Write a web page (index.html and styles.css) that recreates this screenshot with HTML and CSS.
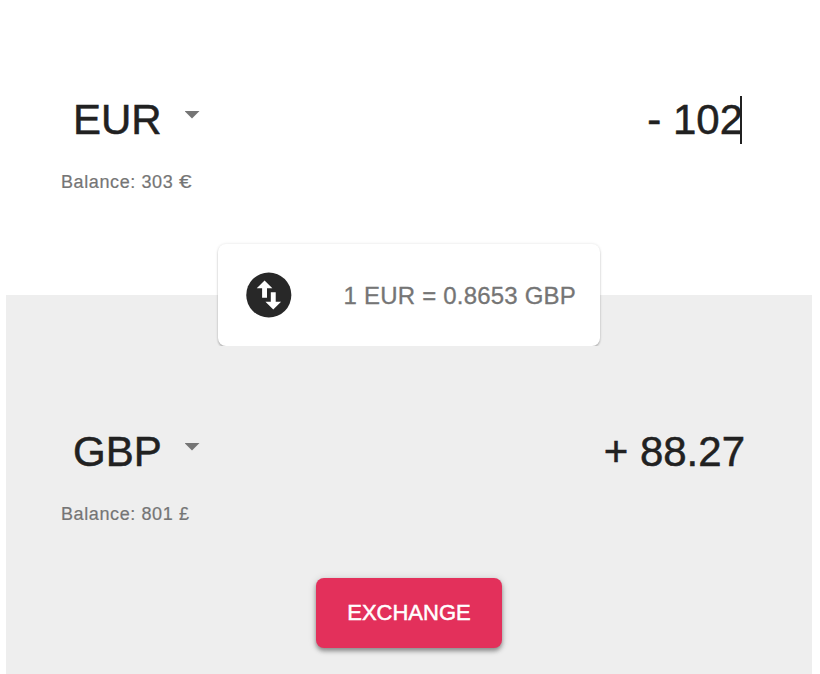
FILE: index.html
```html
<!DOCTYPE html>
<html lang="en">
<head>
<meta charset="utf-8">
<title>Currency exchange</title>
<link rel="stylesheet" href="styles.css">
</head>
<body>
<main class="exchange">
  <section class="pocket">
    <div class="pocket-row">
      <div class="select"><span class="currency">EUR</span><i class="arrow"></i></div>
      <div class="amount amount-from"><span class="amount-text">- 102</span><i class="caret"></i></div>
    </div>
    <p class="balance">Balance: 303 <span class="euro">€</span></p>
  </section>
  <section class="pocket pocket-to">
    <div class="rate">
      <svg class="swap" viewBox="0 0 24 24"><circle cx="12" cy="12" r="10.1" fill="#282828"/><path fill="#fff" d="M6.600 9L10.100 5.500 13.600 9H11.200v4.200H9V9zM17.500 15L14 18.500 10.500 15H12.900v-4.200h2.200V15z"/></svg>
      <span class="rate-text">1 EUR = 0.8653 GBP</span>
    </div>
    <div class="pocket-row">
      <div class="select"><span class="currency">GBP</span><i class="arrow"></i></div>
      <div class="amount amount-to"><span class="amount-text">+ 88.27</span></div>
    </div>
    <p class="balance">Balance: 801 £</p>
    <button class="submit" type="button">EXCHANGE</button>
  </section>
</main>
</body>
</html>
```
FILE: styles.css
```css
* { box-sizing: border-box; }
body { margin: 0; background: #fff; color: #212121; font-family: "Liberation Sans", Arial, sans-serif; }
.exchange { width: 806px; height: 674px; margin-left: 6px; overflow: hidden; }
.pocket { height: 295px; padding: 95px 68px 0 55px; }
.pocket-to { position: relative; height: 379px; padding-top: 132px; background: #eee; }
.pocket-row { display: flex; justify-content: space-between; height: 50px; line-height: 50px; font-size: 42px; -webkit-text-stroke: .5px #212121; }
.select { display: flex; padding-left: 12px; }
.currency { width: 88px; white-space: nowrap; }
.arrow { width: 15px; height: 7.5px; margin: 16px 0 0 23.5px; background: #757575; clip-path: polygon(0 0, 100% 0, 50% 100%); }
.amount { display: flex; }
.amount-from { padding-right: 2px; }
.amount-to { margin-right: -1px; }
.caret { width: 2px; height: 48px; margin: 1px 0 0 -3px; background: #212121; }
.balance { height: 24px; margin: 25px 0 0; font-size: 18px; line-height: 24px; letter-spacing: .6px; color: #757575; -webkit-text-stroke: .2px #757575; }
.euro { display: inline-block; transform: scaleX(1.25); transform-origin: left center; }
.rate { position: absolute; top: -51px; left: 212px; display: flex; align-items: center; width: 382px; height: 102px; padding: 0 24px; border-radius: 8px; background: #fff; box-shadow: 0 2px 2px rgba(0,0,0,.2), 0 0 3px rgba(0,0,0,.12); clip-path: inset(-6px -6px 0 -6px); }
.swap { width: 54px; height: 54px; }
.rate-text { margin: 2px 0 0 48px; font-size: 24px; letter-spacing: .2px; white-space: nowrap; color: #757575; -webkit-text-stroke: .3px #757575; }
.submit { display: block; width: 186px; height: 70px; margin: 52px 0 0 255px; padding: 0; border: 0; border-radius: 8px; background: #e3305b; color: #fff; font: 500 22px "Liberation Sans", Arial, sans-serif; -webkit-text-stroke: .5px #fff; box-shadow: 0 3px 4px rgba(0,0,0,.36), 0 1px 8px rgba(0,0,0,.14); }
```
